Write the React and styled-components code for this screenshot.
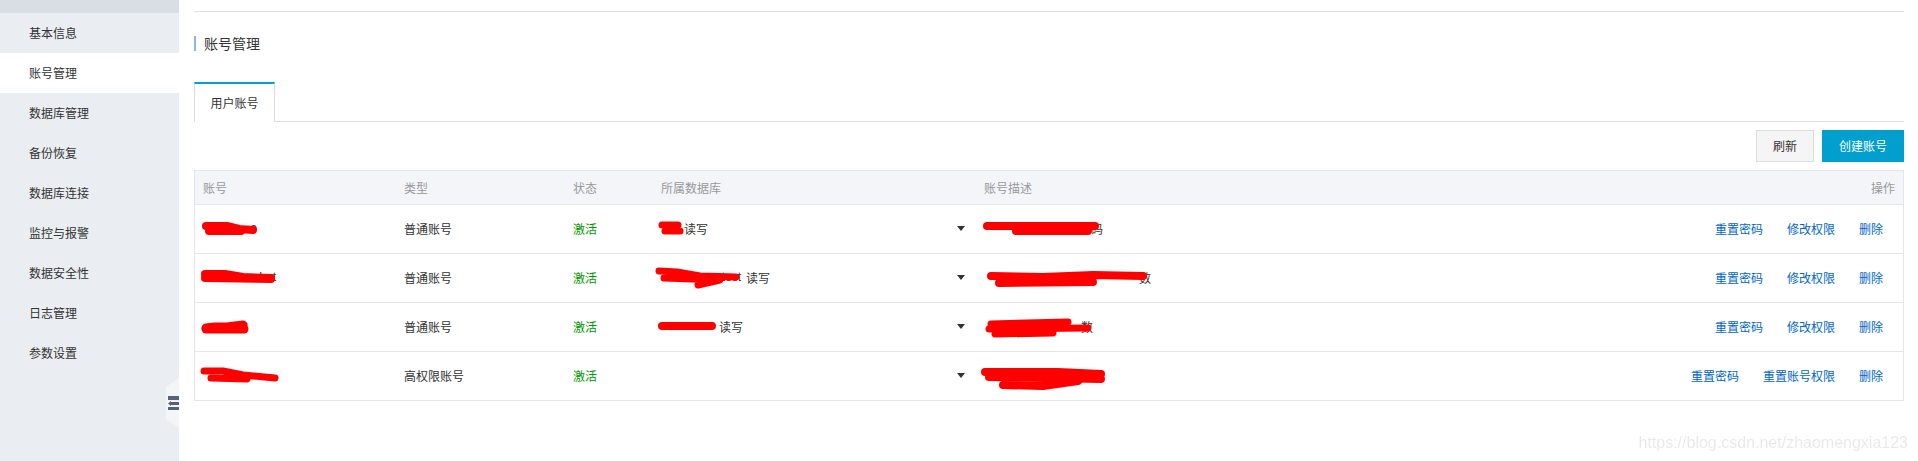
import React from 'react';
import styled, { createGlobalStyle } from 'styled-components';

const GlobalStyle = createGlobalStyle`
    html, body {
        margin: 0;
        padding: 0;
        height: 100%;
        overflow: hidden;
        background: #fff;
    }
    body {
        font-family: "Liberation Sans", "Noto Sans CJK SC", sans-serif;
        font-size: 12px;
        color: #333;
    }
`;

const Page = styled.div`
    position: relative;
    display: flex;
    height: 100vh;
`;

// left menu
const Sidebar = styled.aside`
    position: relative;
    flex: 0 0 179px;
    background: #eaedf1;
`;

const SideTop = styled.div`
    height: 13px;
    background: #d9dee4;
`;

const SideItem = styled.div`
    display: flex;
    align-items: center;
    box-sizing: border-box;
    height: 40px;
    padding: 0 0 2px 29px;
    background: ${(p) => (p.$active ? '#fff' : 'transparent')};
`;

const Collapse = styled.div`
    position: absolute;
    top: 378px;
    right: 0;
    display: flex;
    align-items: center;
    justify-content: flex-end;
    width: 13px;
    height: 50px;
    background: #f4f5f6;
    clip-path: polygon(0 18%, 100% 0, 100% 100%, 0 82%);
`;

const Main = styled.main`
    flex: 1;
    min-width: 0;
    padding: 11px 14px 0 15px;
`;

const TopLine = styled.div`
    border-top: 1px solid #e1e1e1;
`;

const Title = styled.h2`
    margin: 24px 0 0;
    padding-left: 8px;
    height: 15px;
    line-height: 16px;
    border-left: 2px solid #88b7e0;
    font-size: 14px;
    font-weight: normal;
`;

const Tabs = styled.div`
    display: flex;
    margin-top: 31px;
    height: 39px;
    border-bottom: 1px solid #ddd;
`;

const Tab = styled.div`
    display: flex;
    align-items: center;
    justify-content: center;
    box-sizing: border-box;
    width: 81px;
    height: 40px;
    padding-bottom: 2px;
    border-top: 2px solid #00a1cb;
    border-left: 1px solid #ddd;
    border-right: 1px solid #ddd;
    background: #fff;
`;

const Toolbar = styled.div`
    display: flex;
    justify-content: flex-end;
    gap: 8px;
    margin: 8px 0;
`;

const Button = styled.button`
    box-sizing: border-box;
    height: 32px;
    width: ${(p) => (p.$primary ? '82px' : '58px')};
    padding: 0 0 2px;
    border: 1px solid ${(p) => (p.$primary ? '#009fce' : '#ddd')};
    background: ${(p) => (p.$primary ? '#009fce' : '#f5f5f5')};
    color: ${(p) => (p.$primary ? '#fff' : '#333')};
    font: inherit;
`;

const Table = styled.div`
    border: 1px solid #e3e7ec;
    border-bottom: 0;
`;

const Row = styled.div`
    display: grid;
    grid-template-columns: 201px 169px 88px 323px 1fr;
    align-items: center;
    box-sizing: border-box;
    height: ${(p) => (p.$head ? '34px' : '49px')};
    padding-bottom: ${(p) => (p.$head ? '0' : '2px')};
    border-bottom: 1px solid #e3e7ec;
    background: ${(p) => (p.$head ? '#f4f5f9' : '#fff')};
    color: ${(p) => (p.$head ? '#999' : '#333')};
`;

const Cell = styled.div`
    display: flex;
    align-items: center;
    padding-left: 8px;
    color: ${(p) => p.$color || 'inherit'};
`;

const DbCell = styled(Cell)`
    justify-content: space-between;
    padding-right: 11px;
`;

const DbValue = styled.span`
    display: flex;
    align-items: center;
`;

const Caret = styled.span`
    width: 0;
    height: 0;
    border-left: 4.5px solid transparent;
    border-right: 4.5px solid transparent;
    border-top: 5px solid #333;
`;

// last column: description on the left, operations on the right
const SplitCell = styled(Cell)`
    justify-content: space-between;
    padding-right: ${(p) => (p.$head ? '8px' : '20px')};
`;

const Actions = styled.div`
    display: flex;
    gap: 24px;
`;

const ActionLink = styled.a`
    color: #06c;
    cursor: pointer;
`;

// masked text, the scribble lies over it
const Redacted = styled.span`
    position: relative;
    display: inline-flex;
    justify-content: flex-end;
    align-items: center;
    width: ${(p) => p.$w}px;
    height: 16px;
    color: #333;
`;

const ScribbleSvg = styled.svg`
    position: absolute;
    left: 0;
    top: 0;
    width: 100%;
    height: 100%;
    overflow: visible;
    fill: none;
    stroke: #f00;
    stroke-linecap: round;
    stroke-linejoin: round;
`;

const Access = styled.span`
    margin-left: ${(p) => p.$gap || 0}px;
`;

const Watermark = styled.div`
    position: absolute;
    right: 10px;
    bottom: 9px;
    font-family: "Liberation Sans", sans-serif;
    font-size: 16px;
    color: rgba(0, 0, 0, 0.09);
    filter: blur(0.5px);
    pointer-events: none;
`;

const menu = ['基本信息', '账号管理', '数据库管理', '备份恢复', '数据库连接', '监控与报警', '数据安全性', '日志管理', '参数设置'];

const rows = [
    {
        type: '普通账号',
        account: { w: 54, tail: 'o', stroke: 8, d: ['M3 6 L24 6 L36 9 L50 10', 'M6 11 L38 11'] },
        db: { w: 23, gap: 0, stroke: 7, d: ['M1 5 L17 5', 'M4 11 L19 11'] },
        desc: { w: 119, tail: '码', stroke: 8, d: ['M3 6 L111 6', 'M32 11 L104 11'] },
        links: ['重置密码', '修改权限', '删除'],
    },
    {
        type: '普通账号',
        account: { w: 73, tail: 'hot', stroke: 8, d: ['M2 5 L22 5 L40 8 L68 9', 'M2 9 L68 10'] },
        db: { w: 80, tail: 'test', gap: 5, stroke: 7, d: ['M-2 2 L16 3 L39 7 L75 8', 'M3 9 L59 11 L37 16'] },
        desc: { w: 167, tail: '数', stroke: 8, d: ['M7 7 L59 8 L109 6 L159 7', 'M15 14 L109 13'] },
        links: ['重置密码', '修改权限', '删除'],
    },
    {
        type: '普通账号',
        account: { w: 45, tail: 'g', stroke: 9, d: ['M3 10 L12 9 L24 9 L40 7', 'M3 11 L41 11'] },
        db: { w: 54, gap: 4, stroke: 8, d: ['M1 8 L51 8'] },
        desc: { w: 109, tail: '数', stroke: 7, d: ['M7 6 L84 4', 'M5 11 L104 10', 'M11 16 L69 15'] },
        links: ['重置密码', '修改权限', '删除'],
    },
    {
        type: '高权限账号',
        account: { w: 74, stroke: 7, d: ['M1 4 L20 4 L40 8 L72 11', 'M8 11 L44 12'] },
        desc: { w: 121, stroke: 8, d: ['M1 5 L74 5 L117 7', 'M5 10 L117 12', 'M19 18 L59 19 L94 14'] },
        links: ['重置密码', '重置账号权限', '删除'],
    },
];

const Masked = ({ w, tail, stroke = 6, d }) => (
    <Redacted $w={w}>
        {tail}
        <ScribbleSvg strokeWidth={stroke}>
            {d.map((path) => <path key={path} d={path} />)}
        </ScribbleSvg>
    </Redacted>
);

const CollapseIcon = () => (
    <svg width="11" height="14" viewBox="0 0 11 14" fill="#546478">
        <rect x="0" y="0" width="11" height="4" />
        <rect x="3" y="6" width="8" height="3" />
        <path d="M0 7.5 L3 5 V10 Z" />
        <rect x="0" y="11" width="11" height="3" />
    </svg>
);

const App = () => {
    return (
        <Page>
            <GlobalStyle />
            <Sidebar>
                <SideTop />
                {menu.map((item) => (
                    <SideItem key={item} $active={item === '账号管理'}>{item}</SideItem>
                ))}
                <Collapse><CollapseIcon /></Collapse>
            </Sidebar>
            <Main>
                <TopLine />
                <Title>账号管理</Title>
                <Tabs>
                    <Tab>用户账号</Tab>
                </Tabs>
                <Toolbar>
                    <Button>刷新</Button>
                    <Button $primary>创建账号</Button>
                </Toolbar>
                <Table>
                    <Row $head>
                        <Cell>账号</Cell>
                        <Cell>类型</Cell>
                        <Cell>状态</Cell>
                        <Cell>所属数据库</Cell>
                        <SplitCell $head>
                            <span>账号描述</span>
                            <span>操作</span>
                        </SplitCell>
                    </Row>
                    {rows.map((row, i) => (
                        <Row key={i}>
                            <Cell><Masked {...row.account} /></Cell>
                            <Cell>{row.type}</Cell>
                            <Cell $color="#090">激活</Cell>
                            <DbCell>
                                <DbValue>
                                    {row.db && <Masked {...row.db} />}
                                    {row.db && <Access $gap={row.db.gap}>读写</Access>}
                                </DbValue>
                                <Caret />
                            </DbCell>
                            <SplitCell>
                                <Masked {...row.desc} />
                                <Actions>
                                    {row.links.map((link) => <ActionLink key={link}>{link}</ActionLink>)}
                                </Actions>
                            </SplitCell>
                        </Row>
                    ))}
                </Table>
            </Main>
            <Watermark>https://blog.csdn.net/zhaomengxia123</Watermark>
        </Page>
    );
};

export default App;
